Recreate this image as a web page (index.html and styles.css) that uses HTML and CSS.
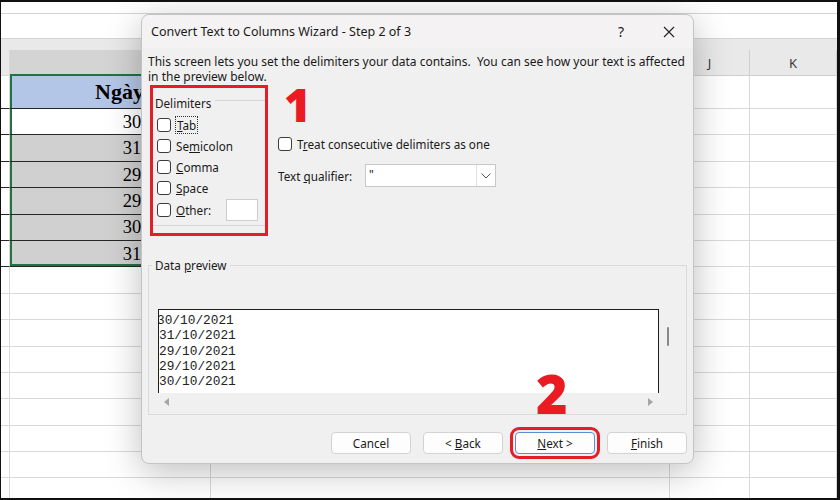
FILE: index.html
```html
<!DOCTYPE html>
<html>
<head>
    <title>Convert Text to Columns Wizard</title>
    <link rel="stylesheet" href="styles.css">
</head>
<body>
<div class="screen">
    <!-- spreadsheet behind the dialog -->
    <div class="sheet">
        <div class="ribbon"></div>
        <div class="formula-bar"></div>
        <div class="head-strip"></div>
        <div class="row col-head">
            <span class="rh"></span>
            <span class="c cb"></span>
            <span class="c"></span>
            <span class="c">J</span>
            <span class="c">K</span>
        </div>
        <div class="row tall tbl">
            <span class="rh"></span>
            <span class="c cb title-cell">Ngày tháng</span>
            <span class="c"></span><span class="c"></span><span class="c"></span>
        </div>
        <div class="row tbl">
            <span class="rh"></span>
            <span class="c cb num">30/10/2021</span>
            <span class="c"></span><span class="c"></span><span class="c"></span>
        </div>
        <div class="row tbl">
            <span class="rh"></span>
            <span class="c cb num shade">31/10/2021</span>
            <span class="c"></span><span class="c"></span><span class="c"></span>
        </div>
        <div class="row tbl">
            <span class="rh"></span>
            <span class="c cb num shade">29/10/2021</span>
            <span class="c"></span><span class="c"></span><span class="c"></span>
        </div>
        <div class="row tbl">
            <span class="rh"></span>
            <span class="c cb num shade">29/10/2021</span>
            <span class="c"></span><span class="c"></span><span class="c"></span>
        </div>
        <div class="row tbl">
            <span class="rh"></span>
            <span class="c cb num shade">30/10/2021</span>
            <span class="c"></span><span class="c"></span><span class="c"></span>
        </div>
        <div class="row tbl last">
            <span class="rh"></span>
            <span class="c cb num shade">31/10/2021</span>
            <span class="c"></span><span class="c"></span><span class="c"></span>
        </div>
        <div class="row"><span class="rh"></span><span class="c"></span><span class="c"></span><span class="c"></span><span class="c"></span></div>
        <div class="row"><span class="rh"></span><span class="c"></span><span class="c"></span><span class="c"></span><span class="c"></span></div>
        <div class="row"><span class="rh"></span><span class="c"></span><span class="c"></span><span class="c"></span><span class="c"></span></div>
        <div class="row"><span class="rh"></span><span class="c"></span><span class="c"></span><span class="c"></span><span class="c"></span></div>
        <div class="row"><span class="rh"></span><span class="c"></span><span class="c"></span><span class="c"></span><span class="c"></span></div>
        <div class="row"><span class="rh"></span><span class="c"></span><span class="c"></span><span class="c"></span><span class="c"></span></div>
        <div class="row"><span class="rh"></span><span class="c"></span><span class="c"></span><span class="c"></span><span class="c"></span></div>
        <div class="row"><span class="rh"></span><span class="c"></span><span class="c"></span><span class="c"></span><span class="c"></span></div>
        <div class="row"><span class="rh"></span><span class="c"></span><span class="c"></span><span class="c"></span><span class="c"></span></div>
    </div>

    <!-- wizard dialog -->
    <div class="dialog">
        <div class="dlg-title">
            <span class="title-text">Convert Text to Columns Wizard - Step 2 of 3</span>
            <span class="title-btn">?</span>
            <span class="title-btn">
                <svg width="12" height="12" viewBox="0 0 12 12"><path d="M1 1L11 11M11 1L1 11" stroke="#222" stroke-width="1.1" fill="none"/></svg>
            </span>
        </div>

        <div class="dlg-body">
            <p class="intro">This screen lets you set the delimiters your data contains.&nbsp; You can see how your text is affected in the preview below.</p>

            <div class="options">
                <div class="annot-box">
                    <div class="group-head">Delimiters</div>
                    <div class="delim-list">
                        <label class="check"><span class="box"></span><span class="focus"><u>T</u>ab</span></label>
                        <label class="check"><span class="box"></span><span>Se<u>m</u>icolon</span></label>
                        <label class="check"><span class="box"></span><span><u>C</u>omma</span></label>
                        <label class="check"><span class="box"></span><span><u>S</u>pace</span></label>
                        <label class="check other"><span class="box"></span><span><u>O</u>ther:</span><span class="other-input"></span></label>
                    </div>
                    <div class="group-foot"></div>
                </div>

                <div class="side-opts">
                    <label class="check"><span class="box"></span><span>T<u>r</u>eat consecutive delimiters as one</span></label>
                    <div class="qualifier">
                        <span class="q-label">Text <u>q</u>ualifier:</span>
                        <div class="combo">
                            <span class="combo-val">"</span>
                            <span class="combo-drop">
                                <svg width="10" height="6" viewBox="0 0 10 6"><path d="M0.5 0.5L5 5L9.5 0.5" stroke="#555" stroke-width="1" fill="none"/></svg>
                            </span>
                        </div>
                    </div>
                </div>
            </div>

            <fieldset class="preview">
                <legend>Data <u>p</u>review</legend>
                <div class="preview-box">
                    <div class="preview-main">
                        <div class="preview-text">30/10/2021<br>31/10/2021<br>29/10/2021<br>29/10/2021<br>30/10/2021</div>
                        <div class="hscroll"><span class="arrow-left"></span><span class="arrow-right"></span></div>
                    </div>
                    <div class="vscroll"><span class="thumb"></span></div>
                </div>
            </fieldset>

            <div class="buttons">
                <button>Cancel</button>
                <button>&lt; <u>B</u>ack</button>
                <button class="primary"><u>N</u>ext &gt;</button>
                <button><u>F</u>inish</button>
            </div>
        </div>

        <span class="step-num one">1</span>
        <span class="step-num two">2</span>
    </div>
</div>
</body>
</html>
```

FILE: styles.css
```css
* {
    box-sizing: border-box;
}

body {
    margin: 0;
    background-color: #fff;
    font-family: "Noto Sans", sans-serif;
}

.screen {
    position: relative;
    width: 840px;
    height: 500px;
    overflow: hidden;
    background-color: #fff;
    border-style: solid;
    border-color: #111;
    border-width: 2px 3px 2px 1px;
}

/* ---------- spreadsheet ---------- */

.ribbon {
    height: 12px;
    border-bottom: 1px solid #d4d4d4;
}

.formula-bar {
    height: 25px;
    border-bottom: 1px solid #d4d4d4;
}

.head-strip {
    height: 11px;
    background-color: #e9e9e9;
}

.row {
    display: grid;
    grid-template-columns: 9px 201px 1fr 80px 87px;
    height: 26.4px;
}

.row > span {
    border-right: 1px solid #d9d9d9;
    border-bottom: 1px solid #d9d9d9;
}

.col-head {
    height: 26px;
    background-color: #e9e9e9;
}

.col-head .c {
    display: flex;
    align-items: center;
    justify-content: center;
    font-size: 13px;
    color: #3a3a3a;
    border-right-color: #cfcfcf;
    border-bottom-color: #cfcfcf;
}

.col-head .cb {
    background-color: #d4d4d4;
    border-bottom: 2px solid #217346;
}

.row.tall {
    height: 33px;
}

.tbl > .rh,
.tbl > .cb {
    border-bottom-color: #262626;
}

.tbl > .cb {
    box-shadow: inset 2px 0 0 #217346;
}

.tbl.last > .cb {
    box-shadow: inset 2px 0 0 #217346, inset 0 -2px 0 #217346;
}

.title-cell {
    background-color: #b4c6e7;
    font-family: "Liberation Serif", serif;
    font-weight: bold;
    font-size: 22px;
    line-height: 1;
    display: flex;
    align-items: center;
    padding-left: 85px;
    white-space: nowrap;
}

.num {
    font-family: "Liberation Serif", serif;
    font-size: 18.5px;
    line-height: 1;
    display: flex;
    align-items: flex-end;
    justify-content: flex-end;
    padding: 0 3px 3px 0;
}

.shade {
    background-color: #d0d0d0;
}

/* ---------- dialog ---------- */

.dialog {
    position: absolute;
    left: 140px;
    top: 12px;
    width: 553px;
    height: 450px;
    background-color: #f0f0f0;
    border: 1px solid #c4c4c4;
    border-radius: 8px;
    box-shadow: 0 8px 36px rgba(0, 0, 0, 0.26);
    color: #1a1a1a;
    font-size: 11.7px;
}

.dlg-title {
    display: flex;
    align-items: center;
    height: 33px;
    padding-left: 9px;
    background-color: #f4f2f2;
    border-radius: 8px 8px 0 0;
}

.title-text {
    flex: 1;
    font-size: 12.5px;
}

.title-btn {
    width: 48px;
    font-size: 14px;
    display: flex;
    justify-content: center;
    align-items: center;
}

.dlg-body {
    padding: 0 6px;
}

.intro {
    margin: 0;
    padding-top: 6px;
    font-size: 12px;
    line-height: 15px;
}

.options {
    display: flex;
    gap: 10px;
    margin-top: 1px;
    padding-left: 2px;
}

.annot-box {
    width: 118px;
    height: 151px;
    border: 3px solid #e41e26;
}

.group-head {
    display: flex;
    align-items: flex-start;
    margin-top: 8px;
    padding-left: 2px;
    line-height: 14px;
}

.group-head::after {
    content: "";
    flex: 1;
    margin: 4px 0 0 4px;
    border-top: 1px solid #d6d6d6;
}

.delim-list {
    display: flex;
    flex-direction: column;
    gap: 7px;
    padding: 8px 7px 0 4px;
}

.check {
    display: flex;
    align-items: center;
    gap: 5px;
    height: 14px;
    white-space: nowrap;
}

.box {
    width: 14px;
    height: 14px;
    border: 1px solid #3c3c3c;
    border-radius: 3px;
    background-color: #fff;
    flex: none;
}

.focus {
    outline: 1px dotted #333;
    padding: 0 1px;
}

.check.other {
    height: 22px;
    margin-top: -3px;
}

.other-input {
    margin-left: auto;
    width: 32px;
    height: 22px;
    background-color: #fff;
    border: 1px solid #cdcdcd;
}

.group-foot {
    margin-top: 4px;
    border-top: 1px solid #d6d6d6;
}

.side-opts {
    padding-top: 52px;
}

.qualifier {
    display: flex;
    align-items: center;
    margin-top: 13px;
}

.q-label {
    width: 87px;
}

.combo {
    display: flex;
    width: 131px;
    height: 23px;
    background-color: #fff;
    border: 1px solid #c8c8c8;
}

.combo-val {
    flex: 1;
    padding: 1px 0 0 3px;
}

.combo-drop {
    width: 19px;
    display: flex;
    align-items: center;
    justify-content: center;
    border-left: 1px solid #e0e0e0;
}

.preview {
    margin: 22px 0 0 0;
    padding: 37px 0 4px 9px;
    border: 1px solid #dadada;
    height: 157px;
    min-width: 0;
}

.preview legend {
    padding: 0 3px;
    margin-left: -6px;
    line-height: 14px;
}

.preview-box {
    display: flex;
    height: 101px;
}

.preview-main {
    width: 501px;
    display: flex;
    flex-direction: column;
}

.preview-text {
    height: 84px;
    overflow: hidden;
    background-color: #fff;
    border: 1px solid #1e1e1e;
    border-bottom: none;
    padding-top: 3px;
    text-indent: -2px;
    font-family: "Liberation Mono", monospace;
    font-size: 12.8px;
    line-height: 15.3px;
    color: #222;
}

.hscroll {
    flex: 1;
    display: flex;
    align-items: center;
    justify-content: space-between;
    padding: 0 6px;
}

.arrow-left {
    border-style: solid;
    border-width: 4px 5px 4px 0;
    border-color: transparent #a6a6a6 transparent transparent;
}

.arrow-right {
    border-style: solid;
    border-width: 4px 0 4px 5px;
    border-color: transparent transparent transparent #a6a6a6;
}

.vscroll {
    width: 17px;
    height: 84px;
    padding: 18px 0 0 8px;
}

.thumb {
    display: block;
    width: 2px;
    height: 19px;
    border-radius: 1px;
    background-color: #8a8a8a;
}

.buttons {
    display: flex;
    justify-content: flex-end;
    gap: 12px;
    margin-top: 17px;
}

button {
    width: 80px;
    height: 22px;
    padding: 0;
    font-family: inherit;
    font-size: 11.7px;
    color: #1a1a1a;
    background-color: #fdfdfd;
    border: 1px solid #d3d3d3;
    border-radius: 4px;
}

button.primary {
    border-color: #5b8fcf;
    outline: 3px solid #e41e26;
    outline-offset: 2px;
}

.step-num {
    position: absolute;
    font-family: "Open Sans", sans-serif;
    font-weight: 800;
    color: #ea1b23;
    line-height: 1;
}

.step-num.one {
    left: 142px;
    top: 66px;
    font-size: 46px;
}

.step-num.two {
    left: 394px;
    top: 351px;
    font-size: 54px;
}
```
